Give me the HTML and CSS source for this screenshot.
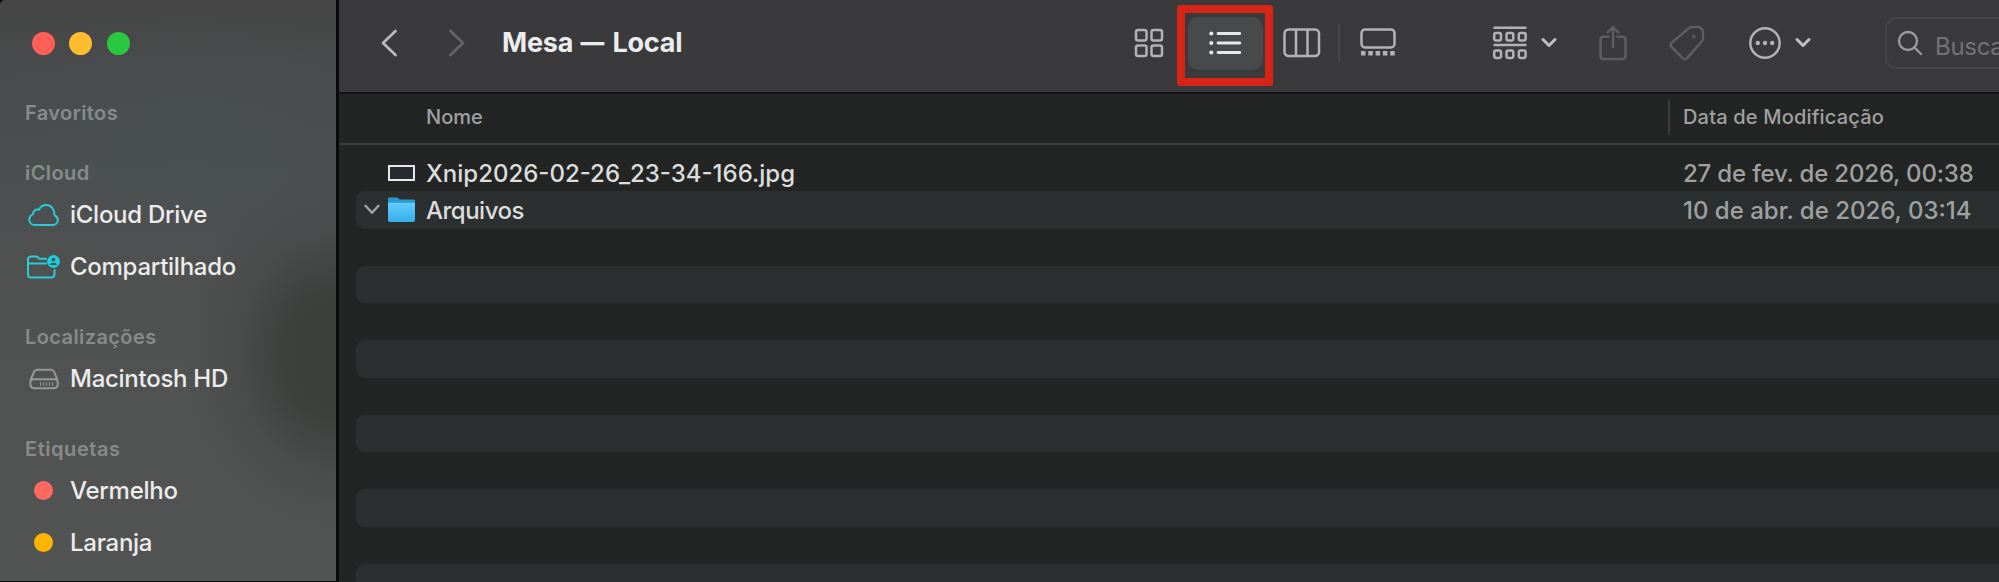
FILE: index.html
```html
<!DOCTYPE html>
<html lang="pt-BR">
<head>
<meta charset="utf-8">
<title>Mesa — Local</title>
<link rel="stylesheet" href="styles.css">
</head>
<body>
<div class="window">
  <aside class="sidebar">
    <div class="lights"><span class="light close"></span><span class="light minimize"></span><span class="light maximize"></span></div>
    <section class="group"><h2 class="label l-fav">Favoritos</h2></section>
    <section class="group">
      <h2 class="label l-icloud">iCloud</h2>
      <div class="item"><svg class="icon cyan" viewBox="0 0 36 28"><path d="M9 24h17.500c3.300 0 5.300-2.200 5.300-4.800s-1.500-4.200-3.300-4.900C28.500 8 25 4 20.300 4c-3.500 0-6 1.800-7.300 4.700-3.500-1-6 1.300-6 4.700-2.300.7-3.700 2.600-3.700 5.100 0 3.100 2.300 5.500 5.700 5.500Z"/></svg><span class="t-drive">iCloud Drive</span></div>
      <div class="item"><svg class="icon cyan" viewBox="0 0 36 28"><path d="M20 5.800h-6.500l-1.700-1.600c-.5-.5-1-.7-1.700-.7H5C3.200 3.500 2 4.700 2 6.500v14.800C2 23.300 3.100 24.500 5.100 24.500h20.300c2 0 3.100-1.200 3.100-3.200v-4.300M2 10.400h18"/><circle class="dot" cx="27.500" cy="8.500" r="6.400"/><circle class="cut" cx="27.500" cy="6.600" r="1.900"/><path class="cut" d="M23.800 12c.7-3 6.700-3 7.400 0Z"/></svg><span class="t-shared">Compartilhado</span></div>
    </section>
    <section class="group">
      <h2 class="label l-loc">Localizações</h2>
      <div class="item"><svg class="icon gray" viewBox="0 0 36 28"><path d="M11 4.700h14c1.600 0 2.500.7 3.100 2.100l3.200 7.700c1.300 5.500.4 8.800-3.500 8.800H8.300c-3.900 0-4.800-3.300-3.500-8.800L8 6.800c.6-1.400 1.500-2.100 3-2.100ZM4.500 15.500c1-.9 2.200-1.200 3.700-1.200h19.600c1.500 0 2.700.3 3.700 1.200"/><path d="M14.500 17.500v3M17.500 17.500v3M20.500 17.500v3M23.500 17.500v3M26.500 17.500v3" stroke-width="1"/></svg><span class="t-mac">Macintosh HD</span></div>
    </section>
    <section class="group">
      <h2 class="label l-tags">Etiquetas</h2>
      <div class="item"><span class="tag red"></span><span class="t-red">Vermelho</span></div>
      <div class="item"><span class="tag orange"></span><span class="t-orange">Laranja</span></div>
    </section>
  </aside>
  <main class="main">
    <header class="toolbar">
      <svg class="nav back" viewBox="0 0 18 28"><path d="M15.500 2 3 14l12.500 12"/></svg>
      <svg class="nav forward" viewBox="0 0 18 28"><path d="M2.500 2 15 14 2.500 26"/></svg>
      <h1 class="title">Mesa <span class="dash">—</span> Local</h1>
      <svg class="tool grid-view" viewBox="0 0 30 30"><rect x="2" y="2" width="10.500" height="10.500" rx="2"/><rect x="17.500" y="2" width="10.500" height="10.500" rx="2"/><rect x="2" y="17.500" width="10.500" height="10.500" rx="2"/><rect x="17.500" y="17.500" width="10.500" height="10.500" rx="2"/></svg>
      <div class="highlight"><div class="selected"><svg viewBox="0 0 32 24"><path d="M9 2.500h22M9 12h22M9 21.500h22"/><circle cx="2.300" cy="2.500" r="2.100"/><circle cx="2.300" cy="12" r="2.100"/><circle cx="2.300" cy="21.500" r="2.100"/></svg></div></div>
      <svg class="tool column-view" viewBox="0 0 38 30"><rect x="1.500" y="1.500" width="34.500" height="26.500" rx="4"/><path d="M13 2v26M24.500 2v26"/></svg>
      <span class="divider"></span>
      <svg class="tool gallery-view" viewBox="0 0 36 30"><rect x="1.500" y="1.500" width="33" height="18" rx="3.500"/><path class="solid" d="M1 23h4.500v4.500H1zM8.300 23h4.500v4.500H8.300zM15.600 23h4.500v4.500h-4.500zM22.900 23h4.500v4.500h-4.500zM30.200 23h4.500v4.500h-4.500z"/></svg>
      <svg class="tool group-by" viewBox="0 0 36 36"><path d="M2.500 2.700h31M2.500 20h31"/><rect x="2.200" y="8" width="6.800" height="7.500" rx="1.800"/><rect x="14.500" y="8" width="6.800" height="7.500" rx="1.800"/><rect x="26.800" y="8" width="6.800" height="7.500" rx="1.800"/><rect x="2.200" y="25.400" width="6.800" height="7.500" rx="1.800"/><rect x="14.500" y="25.400" width="6.800" height="7.500" rx="1.800"/><rect x="26.800" y="25.400" width="6.800" height="7.500" rx="1.800"/></svg>
      <svg class="chevron c-group" viewBox="0 0 16 11"><path d="M2 2.500 8 8.500l6-6"/></svg>
      <svg class="tool share" viewBox="0 0 28 36"><path d="M9.500 11.800H4.500c-2 0-3 1-3 3V31c0 2 1 3 3 3h19c2 0 3-1 3-3V14.800c0-2-1-3-3-3h-5M14 22V2M8.700 7.300 14 2l5.300 5.300"/></svg>
      <svg class="tool tag-tool" viewBox="0 0 36 36"><path d="M19.500 3.500c1-1 2-1.500 3.500-1.500h6.500c1 0 1.500.3 2.200 1L33 4.500c.8.800 1 1.300 1 2.300v6.400c0 1.500-.4 2.400-1.400 3.500L18 33.200c-1.500 1.500-2.800 1.500-4.300 0L2.500 22c-1.500-1.500-1.500-2.800 0-4.300Z"/><circle class="hole" cx="24.700" cy="11.500" r="1.800"/></svg>
      <svg class="tool more" viewBox="0 0 32 32"><circle cx="16" cy="16" r="14.700"/><g class="solid"><circle cx="8.800" cy="16" r="2.200"/><circle cx="16" cy="16" r="2.200"/><circle cx="23.200" cy="16" r="2.200"/></g></svg>
      <svg class="chevron c-more" viewBox="0 0 16 11"><path d="M2 2.500 8 8.500l6-6"/></svg>
      <div class="search"><svg viewBox="0 0 26 26"><circle cx="11" cy="11" r="9"/><path d="m17.500 17.500 6.500 6.500"/></svg><span>Busca</span></div>
    </header>
    <div class="columns">
      <span class="col-name"><span class="h-name">Nome</span></span>
      <span class="col-date"><span class="h-date">Data de Modificação</span></span>
    </div>
    <div class="rows">
      <div class="row"><span class="disclosure"></span><span class="file"><span class="thumb"></span></span><span class="name n-file">Xnip2026-02-26_23-34-166.jpg</span><span class="date d-1">27 de fev. de 2026, 00:38</span></div>
      <div class="row"><span class="disclosure"><svg viewBox="0 0 16 11"><path d="M1.500 1.800 8 8.800l6.500-7"/></svg></span><span class="file"><svg viewBox="0 0 27 25"><defs><linearGradient id="folder" x2="0" y2="1"><stop stop-color="#62cdfb"/><stop offset="1" stop-color="#35aee9"/></linearGradient></defs><path fill="#279cce" d="M0 2Q0 .5 1.500.5H9l3 2h13.500Q27 2.500 27 4v8H0Z"/><path fill="url(#folder)" d="M0 5.700h27V23q0 2-2 2H2q-2 0-2-2Z"/></svg></span><span class="name n-folder">Arquivos</span><span class="date d-2">10 de abr. de 2026, 03:14</span></div>
      <div class="row"></div><div class="row"></div><div class="row"></div><div class="row"></div><div class="row"></div><div class="row"></div><div class="row"></div><div class="row"></div><div class="row"></div><div class="row"></div>
    </div>
  </main>
</div>
</body>
</html>
```
FILE: styles.css
```css
* { box-sizing: border-box; }
body { margin: 0; background: #0d0e0e; font-family: Inter, "Liberation Sans", sans-serif; }
h1, h2 { margin: 0; }
svg { display: block; flex: none; fill: none; stroke-linecap: round; stroke-linejoin: round; }
.window { display: flex; width: 1999px; height: 582px; overflow: hidden; white-space: nowrap; }

.sidebar {
  flex: none; width: 339px; height: 581px; border-right: 3px solid #090a0a; border-top-left-radius: 5px;
  background:
    radial-gradient(ellipse 155px 185px at 336px 355px, #3a3d39 0%, #3a3c3acc 35%, #43444566 65%, transparent 100%),
    radial-gradient(ellipse 210px 130px at 190px 140px, #4a5152aa, transparent),
    linear-gradient(#464646 0, #494b4c 90px, #4d5050 200px, #505251 330px, #525453 582px);
}
.lights { display: flex; gap: 14.300px; padding: 32px 0 0 32px; height: 97px; }
.light { width: 23px; height: 23px; border-radius: 50%; }
.close { background: #ff5f57; }
.minimize { background: #febc2e; }
.maximize { background: #28c840; }
.group { padding-left: 25px; margin-bottom: 28.600px; }
.label { height: 31.500px; line-height: 32px; font-size: 20px; font-weight: 600; letter-spacing: .4px; color: #888b8b; }
.l-tags { letter-spacing: .55px; }
.item { display: flex; align-items: center; height: 52px; padding-left: 1px; font-size: 24px; font-weight: 500; letter-spacing: -.27px; color: #ececec; }
.icon { width: 36px; height: 28px; margin-right: 8px; stroke-width: 2; }
.cyan { stroke: #2ccbd8; }
.cyan .dot { fill: #19cfe0; stroke: none; }
.cyan .cut { fill: #3f5558; stroke: none; }
.gray { stroke: #979999; }
.tag { width: 19px; height: 19px; border-radius: 50%; margin: 0 17px 0 8px; }
.red { background: #ff6961; }
.orange { background: #ffb400; }

.main { flex: 1; min-width: 0; background: #222524; }
.toolbar { display: flex; align-items: center; height: 94px; padding-bottom: 7px; background: #3a3a3c; border-bottom: 2px solid #141516; }
.toolbar > * { flex: none; }
.nav { width: 18px; height: 28px; stroke-width: 2.800; }
.back { margin-left: 41px; stroke: #b9b9bb; }
.forward { margin-left: 50px; stroke: #646466; }
.title { margin: 1px 0 0 36px; width: 632px; font-size: 27px; line-height: 36px; font-weight: 700; letter-spacing: -.2px; color: #ececed; }
.dash { display: inline-block; transform: scaleX(.88); }
.tool { stroke: #b3b3b5; stroke-width: 2.500; }
.solid { fill: #b3b3b5; stroke: none; }
.grid-view { width: 30px; height: 30px; margin-left: -.5px; }
.highlight { width: 96px; height: 81px; margin: 5px 0 0 13.500px; border: 8px solid #d62417; border-radius: 3px; padding: 4px 3px; }
.selected { height: 53px; width: 75px; border-radius: 10px; background: #48494b; display: grid; place-items: center; }
.selected svg { width: 32px; height: 24px; margin-right: 2px; stroke: #e7e7e8; stroke-width: 2.800; }
.selected circle { fill: #e7e7e8; stroke: none; }
.column-view { width: 38px; height: 30px; margin-left: 10px; }
.divider { width: 2px; height: 38px; margin-left: 17px; background: #464648; }
.gallery-view { width: 36px; height: 30px; margin-left: 20px; }
.group-by { width: 36px; height: 36px; margin-left: 96px; }
.chevron { width: 16px; height: 11px; stroke: #c0c0c2; stroke-width: 3; }
.c-group { margin-left: 13px; }
.share { width: 28px; height: 36px; margin-left: 42px; stroke: #5d5d5f; }
.tag-tool { width: 36px; height: 36px; margin-left: 42px; stroke: #5d5d5f; }
.hole { fill: #5d5d5f; stroke: none; }
.more { width: 32px; height: 32px; margin-left: 44px; }
.c-more { margin-left: 14px; }
.search { display: flex; align-items: center; width: 150px; height: 52px; margin-left: 74px; padding-left: 10px; border: 2px solid #454547; border-radius: 11px; font-size: 24px; letter-spacing: -.3px; color: #737375; }
.search svg { width: 26px; height: 26px; margin-right: 12px; stroke: #9b9b9d; stroke-width: 2.300; }
.search span { margin-top: 7px; }

.columns { display: flex; height: 51px; padding-top: 6px; border-bottom: 2px solid #3b3e3e; font-size: 20px; font-weight: 500; line-height: 34px; color: #9fa1a1; }
.col-name { width: 1329px; padding-left: 87px; }
.col-date { height: 35px; padding-left: 13px; border-left: 2px solid #3b3e3e; letter-spacing: .18px; }
.rows { padding: 9px 0 0 17px; }
.row { display: flex; align-items: center; height: 37.250px; border-radius: 9px 0 0 9px; font-size: 24px; font-weight: 500; color: #dcdddd; }
.row:nth-child(even) { background: #2c2f2f; }
.disclosure { width: 32px; padding-left: 8px; }
.disclosure svg { width: 16px; height: 11px; stroke: #a0a2a2; stroke-width: 2.400; }
.file { width: 38px; }
.file svg { width: 27px; height: 25px; }
.thumb { display: block; width: 27px; height: 16px; border: 2px solid #e9e9ed; background: #292a31; }
.name { width: 1257px; padding-top: 1px; }
.n-folder { letter-spacing: -.5px; }
.date { padding-top: 1px; color: #9fa1a1; }
.d-1 { letter-spacing: -.18px; }
```
